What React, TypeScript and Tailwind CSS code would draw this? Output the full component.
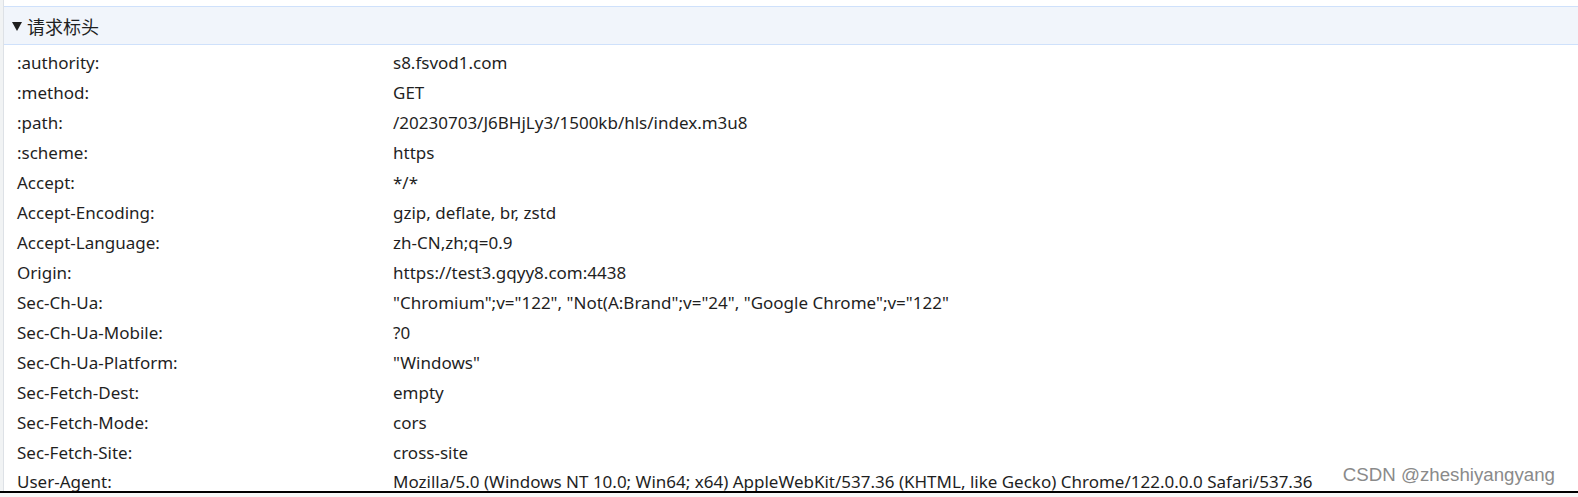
import React from "react";

const rows: [string, string][] = [
  [":authority:", "s8.fsvod1.com"],
  [":method:", "GET"],
  [":path:", "/20230703/J6BHjLy3/1500kb/hls/index.m3u8"],
  [":scheme:", "https"],
  ["Accept:", "*/*"],
  ["Accept-Encoding:", "gzip, deflate, br, zstd"],
  ["Accept-Language:", "zh-CN,zh;q=0.9"],
  ["Origin:", "https://test3.gqyy8.com:4438"],
  ["Sec-Ch-Ua:", "\"Chromium\";v=\"122\", \"Not(A:Brand\";v=\"24\", \"Google Chrome\";v=\"122\""],
  ["Sec-Ch-Ua-Mobile:", "?0"],
  ["Sec-Ch-Ua-Platform:", "\"Windows\""],
  ["Sec-Fetch-Dest:", "empty"],
  ["Sec-Fetch-Mode:", "cors"],
  ["Sec-Fetch-Site:", "cross-site"],
  [
    "User-Agent:",
    "Mozilla/5.0 (Windows NT 10.0; Win64; x64) AppleWebKit/537.36 (KHTML, like Gecko) Chrome/122.0.0.0 Safari/537.36",
  ],
];

export default function App() {
  return (
    <div className="w-[1578px] h-[497px] bg-white flex flex-col overflow-hidden [font-family:'Noto_Sans','Noto_Sans_CJK_SC',sans-serif] text-[#1f1f1f]">
      <div className="relative h-[491px] flex overflow-hidden">
        <div className="w-[4px] bg-[#f1f3f4] border-r border-[#dde1e6] shrink-0" />
        <div className="flex-1 flex flex-col pt-[6px]">
          <div className="h-[39px] shrink-0 flex items-center bg-[#f1f5fb] border-y border-[#cfe1fb] pl-[8px] gap-[5px]">
            <svg width="10" height="9" viewBox="0 0 10 9" className="mt-[1px]">
              <path d="M0 0 H10 L5 9 Z" fill="#1f1f1f" />
            </svg>
            <span className="text-[18px] [font-family:'Noto_Sans_CJK_SC',sans-serif] leading-none">请求标头</span>
          </div>
          <div className="pt-[2px] pl-[13px] flex flex-col">
            {rows.map(([k, v], i) => (
              <div
                key={k}
                className={
                  i === rows.length - 1
                    ? "h-[24px] pt-[6px] shrink-0 grid grid-cols-[376px_1fr] items-start text-[17px] leading-[18px] whitespace-nowrap"
                    : "h-[30px] shrink-0 grid grid-cols-[376px_1fr] items-center text-[17px] leading-none whitespace-nowrap"
                }
              >
                <span>{k}</span>
                <span>{v}</span>
              </div>
            ))}
          </div>
        </div>
        <div className="absolute right-[23px] bottom-[6px] text-[18.7px] leading-none text-[#8a8a8a] [font-family:'Liberation_Sans',Arial,sans-serif]">
          CSDN @zheshiyangyang
        </div>
      </div>
      <div className="h-[2px] bg-black shrink-0" />
      <div className="flex-1 bg-[#f7f7f7]" />
    </div>
  );
}
